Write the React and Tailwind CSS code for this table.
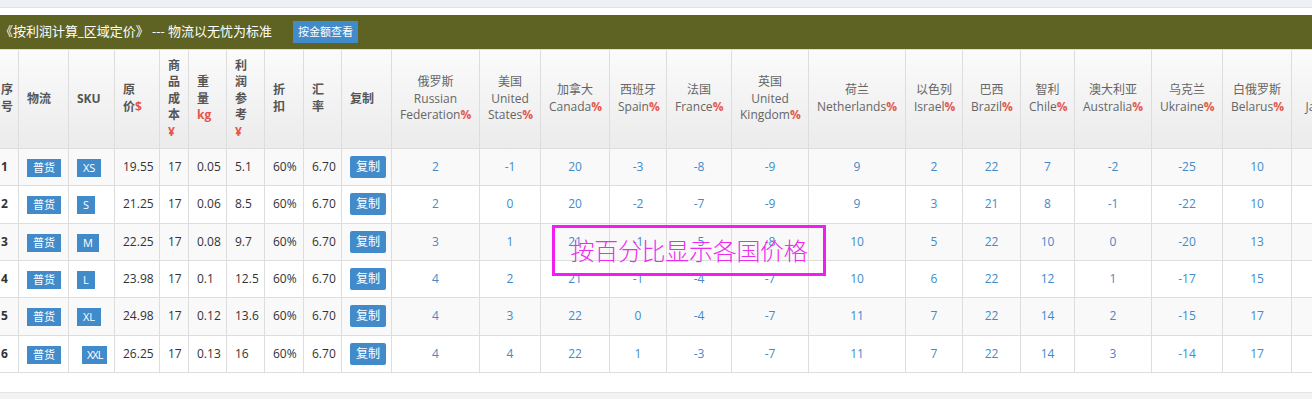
import React from "react";

const countries = [
  { zh: "俄罗斯", en: ["Russian", "Federation"], w: "w-[88px]" },
  { zh: "美国", en: ["United", "States"], w: "w-[61px]" },
  { zh: "加拿大", en: ["Canada"], w: "w-[69px]" },
  { zh: "西班牙", en: ["Spain"], w: "w-[57px]" },
  { zh: "法国", en: ["France"], w: "w-[65px]" },
  { zh: "英国", en: ["United", "Kingdom"], w: "w-[77px]" },
  { zh: "荷兰", en: ["Netherlands"], w: "w-[97px]" },
  { zh: "以色列", en: ["Israel"], w: "w-[57px]" },
  { zh: "巴西", en: ["Brazil"], w: "w-[58px]" },
  { zh: "智利", en: ["Chile"], w: "w-[54px]" },
  { zh: "澳大利亚", en: ["Australia"], w: "w-[77px]" },
  { zh: "乌克兰", en: ["Ukraine"], w: "w-[71px]" },
  { zh: "白俄罗斯", en: ["Belarus"], w: "w-[69px]" },
  { zh: "日本", en: ["Japan"], w: "w-[70px]" },
];

const rows = [
  { n: 1, sku: "XS", price: "19.55", cost: "17", wt: "0.05", prof: "5.1", v: [2, -1, 20, -3, -8, -9, 9, 2, 22, 7, -2, -25, 10, ""] },
  { n: 2, sku: "S", price: "21.25", cost: "17", wt: "0.06", prof: "8.5", v: [2, 0, 20, -2, -7, -9, 9, 3, 21, 8, -1, -22, 10, ""] },
  { n: 3, sku: "M", price: "22.25", cost: "17", wt: "0.08", prof: "9.7", v: [3, 1, 21, -1, -5, -8, 10, 5, 22, 10, 0, -20, 13, ""] },
  { n: 4, sku: "L", price: "23.98", cost: "17", wt: "0.1", prof: "12.5", v: [4, 2, 21, -1, -4, -7, 10, 6, 22, 12, 1, -17, 15, ""] },
  { n: 5, sku: "XL", price: "24.98", cost: "17", wt: "0.12", prof: "13.6", v: [4, 3, 22, 0, -4, -7, 11, 7, 22, 14, 2, -15, 17, ""] },
  { n: 6, sku: "XXL", price: "26.25", cost: "17", wt: "0.13", prof: "16", v: [4, 4, 22, 1, -3, -7, 11, 7, 22, 14, 3, -14, 17, ""] },
];

const th = "border border-[#dddddd] px-2 py-[7px] align-middle font-bold text-[#555555] text-left";
const thc = "border border-[#dddddd] px-2 py-[7px] align-middle font-normal text-[#666666] text-center";
const td = "border border-[#dddddd] px-2 py-0 align-middle text-left text-[#333333] whitespace-nowrap";
const tdc = "border border-[#dddddd] px-2 py-0 align-middle text-center text-[#428bca]";
const Red = ({ children }) => <span className="text-[#e4574a] font-bold">{children}</span>;

export default function App() {
  return (
    <div
      className="relative w-[1312px] h-[399px] overflow-hidden bg-[#f3f3f3] text-[12px]"
      style={{ fontFamily: '"Open Sans", "Noto Sans CJK SC", sans-serif' }}
    >
      <div className="h-[8px] bg-[#edf0f4] border-b border-[#dde2e8]" />
      <div className="bg-white pt-[7px] border-b border-[#e3e3e3]">
        <div className="h-[34px] bg-[#5e6323] flex items-center text-white">
          <span className="text-[13px]">《按利润计算_区域定价》 --- 物流以无忧为标准</span>
          <span className="ml-[21px] h-[22px] px-[5px] bg-[#428bca] text-[11px] leading-[22px] text-white whitespace-nowrap">按金额查看</span>
        </div>
        <div className="overflow-hidden">
          <table className="table-fixed border-collapse w-[1369px] ml-[-8px] leading-[16.6px]">
            <colgroup>
              <col className="w-[26px]" />
              <col className="w-[50px]" />
              <col className="w-[46px]" />
              <col className="w-[45px]" />
              <col className="w-[29px]" />
              <col className="w-[38px]" />
              <col className="w-[38px]" />
              <col className="w-[39px]" />
              <col className="w-[38px]" />
              <col className="w-[50px]" />
              {countries.map((c) => (
                <col key={c.zh} className={c.w} />
              ))}
            </colgroup>
            <thead>
              <tr className="h-[99px] bg-linear-to-b from-[#fbfbfb] to-[#ebebeb]">
                <th className={th + " text-center"}>序<br />号</th>
                <th className={th}>物流</th>
                <th className={th}>SKU</th>
                <th className={th}>原<br />价<Red>$</Red></th>
                <th className={th}>商<br />品<br />成<br />本<br /><Red>¥</Red></th>
                <th className={th}>重<br />量<br /><Red>kg</Red></th>
                <th className={th}>利<br />润<br />参<br />考<br /><Red>¥</Red></th>
                <th className={th}>折<br />扣</th>
                <th className={th}>汇<br />率</th>
                <th className={th}>复制</th>
                {countries.map((c) => (
                  <th key={c.zh} className={thc}>
                    {c.zh}
                    {c.en.map((e, i) => (
                      <React.Fragment key={i}>
                        <br />
                        {e}
                        {i === c.en.length - 1 && <Red>%</Red>}
                      </React.Fragment>
                    ))}
                  </th>
                ))}
              </tr>
            </thead>
            <tbody className="leading-[20px]">
              {rows.map((r, i) => (
                <tr key={r.n} className={"h-[37.33px] " + (i % 2 === 0 ? "bg-[#f9f9f9]" : "bg-white")}>
                  <td className={td + " text-center font-bold"}>{r.n}</td>
                  <td className={td}>
                    <span className="inline-block h-[18px] px-[6px] bg-[#428bca] text-white text-[11px] leading-[18px] align-middle">普货</span>
                  </td>
                  <td className={td}>
                    {r.sku === "XXL" ? (
                      <span className="inline-block ml-[5px] h-[18px] px-[5px] bg-[#428bca] text-white text-[11px] leading-[18px] tracking-[-1px] align-middle">XXL</span>
                    ) : (
                      <span className="inline-block h-[18px] px-[6px] bg-[#428bca] text-white text-[11px] leading-[18px] align-middle">{r.sku}</span>
                    )}
                  </td>
                  <td className={td}>{r.price}</td>
                  <td className={td}>{r.cost}</td>
                  <td className={td}>{r.wt}</td>
                  <td className={td}>{r.prof}</td>
                  <td className={td}>60%</td>
                  <td className={td}>6.70</td>
                  <td className={td}>
                    <span className="inline-block h-[22px] px-[6px] rounded-[2px] bg-[#428bca] text-white text-[12px] leading-[22px] align-middle">复制</span>
                  </td>
                  {r.v.map((x, j) => (
                    <td key={j} className={tdc}>{x}</td>
                  ))}
                </tr>
              ))}
            </tbody>
          </table>
          <div className="h-[19px] bg-white" />
        </div>
      </div>
      <div className="absolute left-[552px] top-[225px] w-[274px] h-[51px] border-[3px] border-[#f01ef0] flex items-center justify-center">
        <span className="text-[24px] leading-[28px] font-light text-[#ee2aee] tracking-[-0.3px] whitespace-nowrap">按百分比显示各国价格</span>
      </div>
    </div>
  );
}
